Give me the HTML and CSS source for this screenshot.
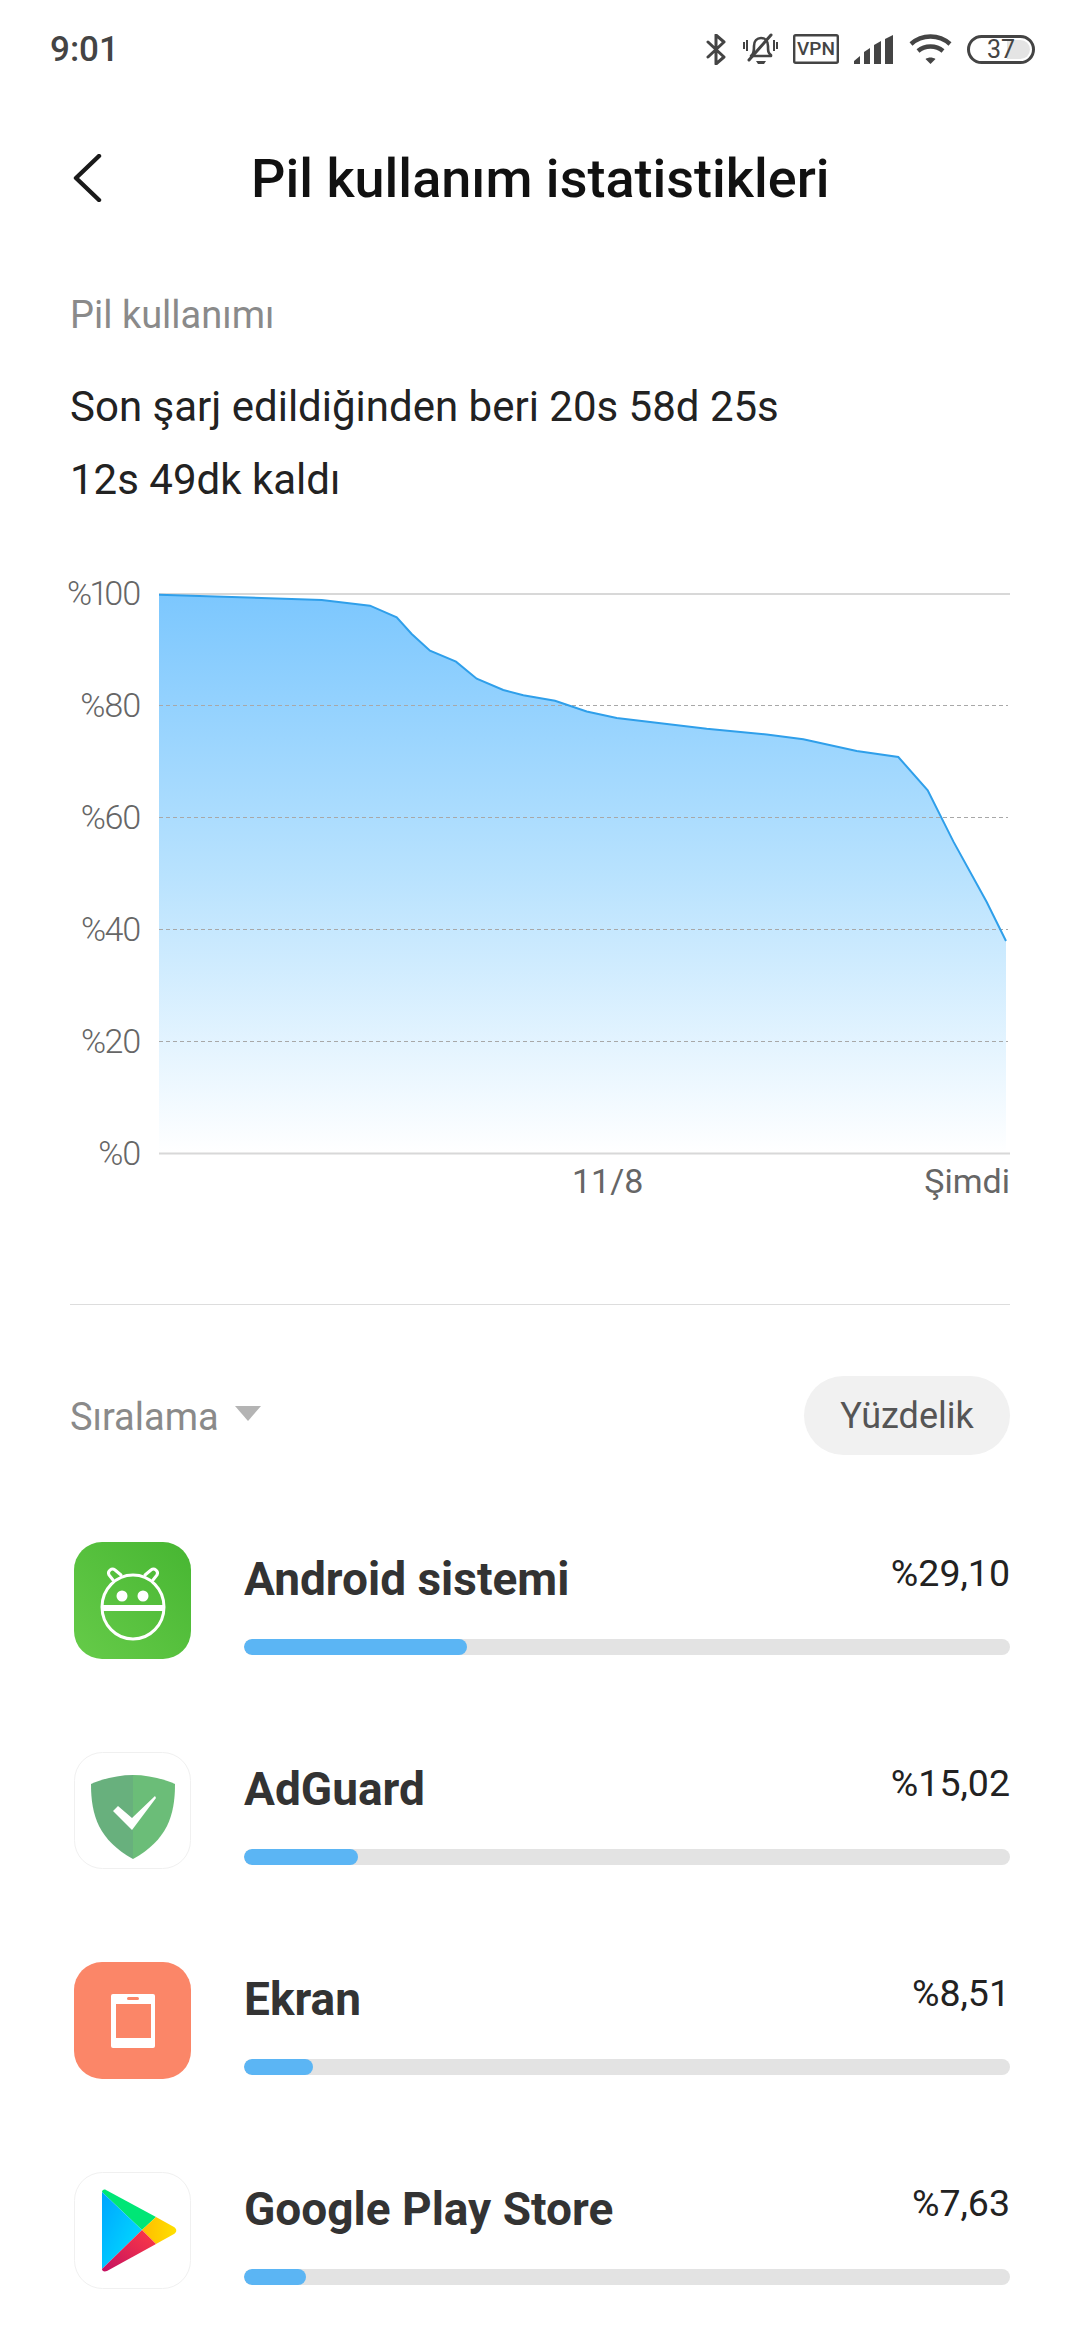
FILE: index.html
```html
<!DOCTYPE html>
<html lang="tr">
<head>
    <meta charset="UTF-8">
    <meta name="viewport" content="width=device-width, initial-scale=1.0">
    <title>Pil kullanım istatistikleri</title>
    <link rel="stylesheet" href="styles.css">
</head>
<body>
    <div class="status-bar">
        <span class="clock">9:01</span>
        <div class="status-icons">
            <svg class="ic-bt" width="20" height="31" viewBox="0 0 20 31"><path d="M2 8l16 15-8 7V1l8 7L2 23" fill="none" stroke="#444" stroke-width="3" stroke-linecap="round" stroke-linejoin="round"/></svg>
            <svg class="ic-bell" width="35" height="32" viewBox="0 0 35 32">
                <path d="M9 22c2-2 2-4 2-9 0-5 3-8 7-8 4 0 7 3 7 8 0 5 0 7 3 9v1H8z" fill="none" stroke="#444" stroke-width="2.6" stroke-linejoin="round"/>
                <path d="M13 28h10l-2 3h-6z" fill="#444"/>
                <path d="M6 27L28 2" stroke="#444" stroke-width="3" stroke-linecap="round"/>
                <path d="M1 9v7M4 7v11M31 7v11M34 9v7" stroke="#444" stroke-width="2"/>
            </svg>
            <svg class="ic-vpn" width="46" height="30" viewBox="0 0 46 30">
                <rect x="1.2" y="1.2" width="43.6" height="27.6" fill="#fff" stroke="#444" stroke-width="2.4" rx="1.5"/>
                <text x="23" y="21" text-anchor="middle" class="vpn-text">VPN</text>
            </svg>
            <svg class="ic-signal" width="40" height="29" viewBox="0 0 40 29">
                <path d="M0 29v-3l6-5v8z M10 29V17l6-4v16z M20 29V10l7-4v23z M31 29V4l8-4v29z" fill="#444"/>
            </svg>
            <svg class="ic-wifi" width="43" height="30" viewBox="0 0 43 30" fill="none" stroke="#444" stroke-width="4.4">
                <path d="M2 10c11-10 28-10 39 0"/>
                <path d="M9 17c7-6 18-6 25 0"/>
                <path d="M21.500 30l-5-5c3-2 7-2 10 0z" fill="#444" stroke="none"/>
            </svg>
            <div class="battery">37</div>
        </div>
    </div>

    <div class="top-bar">
        <svg class="back-icon" width="30" height="48" viewBox="0 0 30 48"><path d="M27 2L4 24l23 22" fill="none" stroke="#1a1a1a" stroke-width="4.400" stroke-linecap="round" stroke-linejoin="round"/></svg>
        <h1>Pil kullanım istatistikleri</h1>
    </div>

    <div class="summary">
        <div class="summary-label">Pil kullanımı</div>
        <div class="summary-line">Son şarj edildiğinden beri 20s 58d 25s</div>
        <div class="summary-line">12s 49dk kaldı</div>
    </div>

    <div class="chart">
        <div class="y-axis">
            <span>%100</span>
            <span>%80</span>
            <span>%60</span>
            <span>%40</span>
            <span>%20</span>
            <span>%0</span>
        </div>
        <div class="plot-wrap">
            <svg class="plot" width="851" height="562" viewBox="159 593 851 562">
                <defs>
                    <linearGradient id="fillGrad" x1="0" y1="0" x2="0" y2="1">
                        <stop offset="0" stop-color="#7cc7fe"/>
                        <stop offset="0.5" stop-color="#b8e2fe"/>
                        <stop offset="1" stop-color="#ffffff"/>
                    </linearGradient>
                </defs>
                <path d="M159 594.700L321.700 600 370 605.700 396.700 617.300 411.700 634 430 650.700 456 661.700 476.700 678.700 503.300 690 523.300 695.300 555 700.700 586.700 711.500 616.700 718 706.700 728.800 766.700 734.500 803.300 739.200 856.700 751 898.300 757 927.700 790.300 953.300 841.400 986.700 902 1006 941V1153H159Z" fill="url(#fillGrad)"/>
                <g class="grid-dash">
                    <path d="M159 705.500H1008"/>
                    <path d="M159 817.500H1008"/>
                    <path d="M159 929.500H1008"/>
                    <path d="M159 1041.500H1008"/>
                </g>
                <path d="M159 594H1010M159 1153.500H1010" stroke="#d8d8d8" stroke-width="2" fill="none"/>
                <path d="M159 594.700L321.700 600 370 605.700 396.700 617.300 411.700 634 430 650.700 456 661.700 476.700 678.700 503.300 690 523.300 695.300 555 700.700 586.700 711.500 616.700 718 706.700 728.800 766.700 734.500 803.300 739.200 856.700 751 898.300 757 927.700 790.300 953.300 841.400 986.700 902 1006 941" fill="none" stroke="#2f9fea" stroke-width="2"/>
            </svg>
            <div class="x-axis">
                <span class="x-mid">11/8</span>
                <span>Şimdi</span>
            </div>
        </div>
    </div>

    <div class="divider"></div>

    <div class="sort-row">
        <div class="sort-label">Sıralama <span class="caret"></span></div>
        <div class="pill">Yüzdelik</div>
    </div>

    <div class="app-list">
        <div class="app-row">
            <svg class="app-icon" width="117" height="117" viewBox="0 0 117 117">
                <defs>
                    <linearGradient id="greenGrad" x1="0" y1="1" x2="1" y2="0">
                        <stop offset="0" stop-color="#66cb49"/>
                        <stop offset="1" stop-color="#47b632"/>
                    </linearGradient>
                </defs>
                <rect width="117" height="117" rx="28" fill="url(#greenGrad)"/>
                <ellipse cx="59" cy="65" rx="31" ry="32" fill="none" stroke="#fff" stroke-width="3"/>
                <path d="M28 66h62" stroke="#fff" stroke-width="6"/>
                <circle cx="48" cy="54" r="5.500" fill="#fff"/>
                <circle cx="69" cy="54" r="5.500" fill="#fff"/>
                <path d="M39 38l-4-5a4 4 0 0 1 6-5l6 5M79 38l4-5a4 4 0 0 0-6-5l-6 5" fill="none" stroke="#fff" stroke-width="3" stroke-linecap="round"/>
            </svg>
            <div class="app-body">
                <div class="app-head"><span class="app-name">Android sistemi</span><span class="app-pct">%29,10</span></div>
                <div class="bar"><div class="bar-fill" style="width:223px"></div></div>
            </div>
        </div>
        <div class="app-row">
            <svg class="app-icon" width="117" height="117" viewBox="0 0 117 117">
                <rect x=".5" y=".5" width="116" height="116" rx="28" fill="#fff" stroke="#f0f0f0"/>
                <path d="M59 23C44 23 28 27 17 32c0 32 8 56 42 75z" fill="#68b07d"/>
                <path d="M59 23c15 0 31 4 42 9 0 32-8 56-42 75z" fill="#6bbd78"/>
                <path d="M39 59l5-5 14 12 23-22 1 2-24 32z" fill="#fff"/>
            </svg>
            <div class="app-body">
                <div class="app-head"><span class="app-name">AdGuard</span><span class="app-pct">%15,02</span></div>
                <div class="bar"><div class="bar-fill" style="width:114px"></div></div>
            </div>
        </div>
        <div class="app-row">
            <svg class="app-icon" width="117" height="117" viewBox="0 0 117 117">
                <rect width="117" height="117" rx="28" fill="#fb8668"/>
                <rect x="37" y="32" width="44" height="54" rx="2" fill="#fff"/>
                <rect x="42" y="42" width="35" height="34" fill="#fb8668"/>
                <rect x="53" y="35" width="12" height="3" rx="1.500" fill="#fb8668"/>
            </svg>
            <div class="app-body">
                <div class="app-head"><span class="app-name">Ekran</span><span class="app-pct">%8,51</span></div>
                <div class="bar"><div class="bar-fill" style="width:69px"></div></div>
            </div>
        </div>
        <div class="app-row">
            <svg class="app-icon" width="117" height="117" viewBox="0 0 117 117">
                <defs>
                    <linearGradient id="playBlue" x1="0" y1="0" x2="1" y2="1">
                        <stop offset="0" stop-color="#00a4ff"/>
                        <stop offset="1" stop-color="#00e4ff"/>
                    </linearGradient>
                    <linearGradient id="playYellow" x1="0" y1="0" x2="1" y2="0">
                        <stop offset="0" stop-color="#ffbc00"/>
                        <stop offset="1" stop-color="#ffe000"/>
                    </linearGradient>
                    <linearGradient id="playRed" x1="1" y1="0" x2="0" y2="1">
                        <stop offset="0" stop-color="#ff3a44"/>
                        <stop offset="1" stop-color="#c31162"/>
                    </linearGradient>
                </defs>
                <rect x=".5" y=".5" width="116" height="116" rx="28" fill="#fff" stroke="#f0f0f0"/>
                <path d="M28 20c0-2 2-3 4-2l50 27-14 13z" fill="#00e676"/>
                <path d="M28 20v77l40-39z" fill="url(#playBlue)"/>
                <path d="M82 45l18 10c3 2 3 5 0 7L82 72 68 58z" fill="url(#playYellow)"/>
                <path d="M68 58l14 14-49 27c-3 1-5 0-5-2z" fill="url(#playRed)"/>
            </svg>
            <div class="app-body">
                <div class="app-head"><span class="app-name">Google Play Store</span><span class="app-pct">%7,63</span></div>
                <div class="bar"><div class="bar-fill" style="width:62px"></div></div>
            </div>
        </div>
    </div>
</body>
</html>
```

FILE: styles.css
```css
html, body {
    margin: 0;
    padding: 0;
}
body {
    width: 1080px;
    height: 2340px;
    overflow: hidden;
    background-color: #ffffff;
    color: #222222;
    font-family: 'Roboto', sans-serif;
}
.status-bar {
    height: 98px;
    display: flex;
    align-items: center;
    justify-content: space-between;
    padding: 0 45px 0 50px;
}
.clock {
    font-size: 35px;
    font-weight: 500;
    color: #444444;
}
.status-icons {
    display: flex;
    align-items: center;
    gap: 15px;
}
.ic-bell {
    margin-left: 2px;
}
.vpn-text {
    font-family: 'Roboto', sans-serif;
    font-size: 19px;
    font-weight: 500;
    fill: #444444;
}
.battery {
    width: 68px;
    height: 29px;
    box-sizing: border-box;
    border: 3px solid #444444;
    border-radius: 15px;
    padding: 2px;
    background-image: linear-gradient(to right, #ffffff 60%, #e4e4e4 60%);
    background-clip: content-box;
    font-size: 25px;
    line-height: 19px;
    text-align: center;
    color: #444444;
    display: flex;
    align-items: center;
    justify-content: center;
}
.top-bar {
    height: 160px;
    display: flex;
    align-items: center;
    padding-left: 72px;
}
.back-icon {
    flex: none;
}
.top-bar h1 {
    margin: 0 0 0 149px;
    font-size: 54px;
    font-weight: 500;
    color: #111111;
}
.summary {
    padding: 34px 70px 0;
}
.summary-label {
    font-size: 38px;
    line-height: 46px;
    color: #8a8a8a;
    margin-bottom: 32px;
}
.summary-line {
    font-size: 42px;
    line-height: 73px;
    color: #222222;
}
.chart {
    margin-top: 56px;
    display: flex;
    padding-left: 71px;
}
.y-axis {
    width: 69px;
    height: 602px;
    display: flex;
    flex-direction: column;
    justify-content: space-between;
    align-items: flex-end;
    font-size: 34px;
    line-height: 42px;
    font-weight: 300;
    letter-spacing: -1.5px;
    font-variant-numeric: proportional-nums;
    color: #666666;
}
.plot-wrap {
    margin: 21px 0 0 19px;
    width: 851px;
}
.plot {
    display: block;
}
.grid-dash path {
    fill: none;
    stroke: #a8a8a8;
    stroke-width: 1;
    stroke-dasharray: 4 3;
}
.x-axis {
    display: flex;
    justify-content: flex-end;
    margin-top: 3px;
    font-size: 34px;
    line-height: 46px;
    color: #666666;
}
.x-mid {
    margin-right: 281px;
}
.divider {
    margin: 100px 70px 0;
    height: 1px;
    background-color: #dddddd;
}
.sort-row {
    margin: 71px 70px 0;
    display: flex;
    align-items: center;
    justify-content: space-between;
}
.sort-label {
    font-size: 38px;
    line-height: 48px;
    padding-top: 2px;
    color: #8a8a8a;
    display: flex;
    align-items: center;
    gap: 16px;
}
.caret {
    width: 0;
    height: 0;
    border-left: 13px solid transparent;
    border-right: 13px solid transparent;
    border-top: 15px solid #b4b4b4;
    margin-bottom: 6px;
}
.pill {
    width: 206px;
    height: 79px;
    border-radius: 40px;
    background-color: #f1f1f1;
    display: flex;
    align-items: center;
    justify-content: center;
    font-size: 36px;
    color: #555555;
}
.app-list {
    margin-top: 87px;
    padding: 0 70px 0 74px;
    display: flex;
    flex-direction: column;
    gap: 93px;
}
.app-row {
    display: flex;
    height: 117px;
    gap: 53px;
}
.app-icon {
    flex: none;
}
.app-body {
    flex: 1;
    display: flex;
    flex-direction: column;
    justify-content: space-between;
    padding-bottom: 4px;
}
.app-head {
    display: flex;
    justify-content: space-between;
    align-items: flex-start;
}
.app-name {
    font-size: 46px;
    line-height: 75px;
    font-weight: 700;
    color: #333333;
}
.app-pct {
    font-size: 37.500px;
    line-height: 62px;
    color: #222222;
}
.bar {
    height: 16px;
    border-radius: 8px;
    background-color: #e3e3e3;
    overflow: hidden;
}
.bar-fill {
    height: 16px;
    border-radius: 8px;
    background-color: #5bb5f4;
}
```
